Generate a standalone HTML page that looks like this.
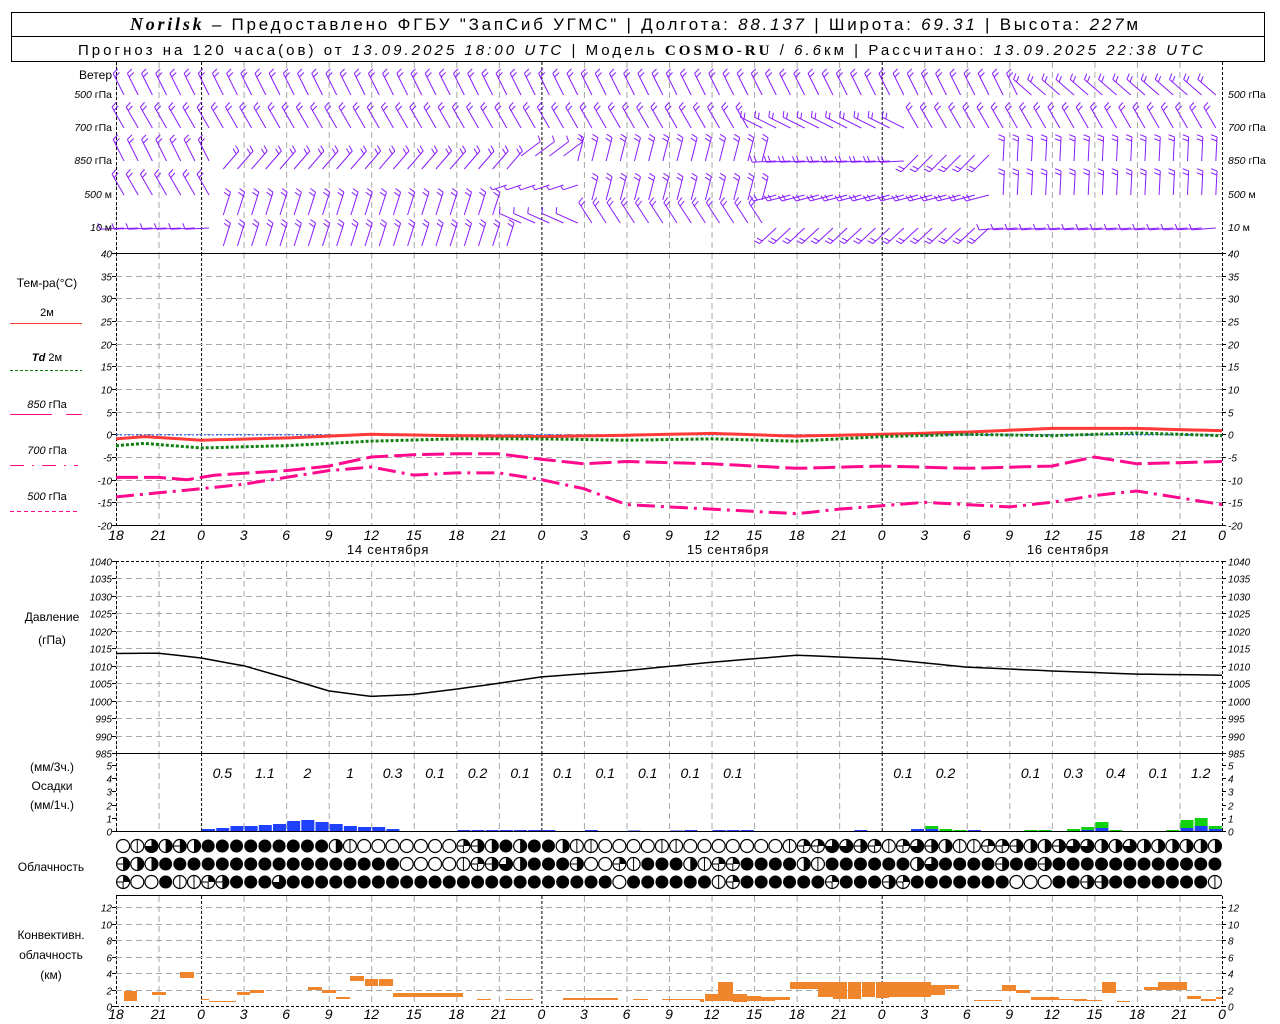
<!DOCTYPE html>
<html><head><meta charset="utf-8">
<style>
html,body{margin:0;padding:0;background:#fff;}
svg{display:block;}
text{font-family:"Liberation Sans","DejaVu Sans",sans-serif;fill:#000;}
.it{font-family:"Liberation Serif",serif;font-style:italic;}
.ax{font-size:10px;font-style:italic;font-family:"Liberation Sans",sans-serif;}
.hx{font-size:14px;font-style:italic;}
</style></head>
<body>
<svg id="s" width="1280" height="1024" viewBox="0 0 1280 1024" xmlns="http://www.w3.org/2000/svg">
<rect x="11.5" y="12.5" width="1253" height="49" fill="none" stroke="#000"/>
<line x1="11" y1="36.5" x2="1265" y2="36.5" stroke="#000"/>
<text x="130" y="30" font-size="17" textLength="1008" lengthAdjust="spacing"><tspan class="it" font-weight="bold" font-size="18">Norilsk</tspan> – Предоставлено ФГБУ "ЗапСиб УГМС" | Долгота: <tspan font-style="italic">88.137</tspan> | Широта: <tspan font-style="italic">69.31</tspan> | Высота: <tspan font-style="italic">227</tspan>м</text>
<text x="78" y="55" font-size="15" textLength="1125" lengthAdjust="spacing">Прогноз на 120 часа(ов) от <tspan font-style="italic">13.09.2025 18:00 UTC</tspan>  | Модель <tspan font-family="Liberation Serif" font-weight="bold">COSMO-RU</tspan> / <tspan font-style="italic">6.6</tspan>км | Рассчитано: <tspan font-style="italic">13.09.2025 22:38 UTC</tspan></text>
<g id="g"></g>
</svg>
<script>
var NS="http://www.w3.org/2000/svg",G=document.getElementById('g');
function el(t,a,txt){var e=document.createElementNS(NS,t);for(var k in a)e.setAttribute(k,a[k]);if(txt!==undefined)e.textContent=txt;G.appendChild(e);return e;}
function X(h){return 116+h*1106/78;}
var L=116,R=1222;
for(var k=0;k<=26;k++){var x=X(k*3);var day=(k%8==2);
 [[62,253],[253,525],[561,753],[753,831],[896,1006]].forEach(function(p){
  el('line',{x1:x+.5,y1:p[0],x2:x+.5,y2:p[1],stroke:day?'#000':'#a8a8a8','stroke-dasharray':day?'3,2':'6,4','stroke-width':1});});}
[[62,253],[253,525],[561,753],[753,831],[896,1006]].forEach(function(p){
 el('line',{x1:L+.5,y1:p[0],x2:L+.5,y2:p[1],stroke:'#000','stroke-dasharray':'3,2'});
 el('line',{x1:R+.5,y1:p[0],x2:R+.5,y2:p[1],stroke:'#000','stroke-dasharray':'3,2'});});
function TY(t){return 253+(40-t)*272/60;}
for(var t=40;t>=-20;t-=5){var y=Math.round(TY(t))+.5;
 if(t<40&&t>-20)el('line',{x1:L,y1:y,x2:R,y2:y,stroke:'#a8a8a8','stroke-dasharray':'6,4'});
 el('line',{x1:L-4,y1:y,x2:L,y2:y,stroke:'#000'});el('line',{x1:R,y1:y,x2:R+4,y2:y,stroke:'#000'});
 el('text',{x:L-4,y:y+4,'text-anchor':'end','class':'ax'},t);el('text',{x:R+6,y:y+4,'class':'ax'},t);}
el('line',{x1:L,y1:253.5,x2:R,y2:253.5,stroke:'#000'});
el('line',{x1:L,y1:525.5,x2:R,y2:525.5,stroke:'#000'});
el('line',{x1:L,y1:TY(0)+.5,x2:R,y2:TY(0)+.5,stroke:'#0040ff','stroke-dasharray':'2,2'});
var hl=['18','21','0','3','6','9','12','15','18','21','0','3','6','9','12','15','18','21','0','3','6','9','12','15','18','21','0'];
function hours(y){for(var k=0;k<=26;k++)el('text',{x:X(k*3),y:y,'text-anchor':'middle','class':'hx'},hl[k]);}
hours(540);hours(1019);
[['14 сентября',371],['15 сентября',711],['16 сентября',1051]].forEach(function(d){el('text',{x:d[1]+17,y:554,'text-anchor':'middle','font-size':13,'letter-spacing':'0.8'},d[0]);});
function series(pts,Y,attrs){var s='';for(var h=0;h<=78;h+=1){var i=0;while(i<pts.length-2&&pts[i+1][0]<h)i++;var a=pts[i],b=pts[i+1];var f=(h-a[0])/(b[0]-a[0]);var v=a[1]+(b[1]-a[1])*Math.max(0,Math.min(1,f));s+=X(h).toFixed(1)+','+Y(v).toFixed(1)+' ';}
 attrs.points=s;attrs.fill='none';el('polyline',attrs);}
series([[0,-1],[2,-0.5],[6,-1.3],[12,-0.8],[18,0],[24,-0.3],[30,-0.5],[36,-0.2],[42,0.2],[48,-0.4],[54,0],[60,0.5],[66,1.3],[72,1.3],[78,0.8]],TY,{stroke:'#ff3838','stroke-width':3});
series([[0,-2.5],[2,-2],[6,-3],[12,-2.5],[18,-1.5],[24,-1],[30,-1],[36,-1.3],[42,-1],[48,-1.5],[54,-0.5],[60,0],[66,-0.3],[72,0.3],[78,-0.3]],TY,{stroke:'#108010','stroke-width':3,'stroke-dasharray':'3,2'});
series([[0,-9.5],[3,-9.5],[5,-10],[7,-9],[12,-8],[15,-7],[18,-5],[21,-4.5],[24,-4.3],[27,-4.3],[30,-5.5],[33,-6.5],[36,-6],[42,-6.5],[48,-7.5],[54,-7],[60,-7.5],[66,-7],[69,-5],[72,-6.5],[78,-6],[84,-6.5]],TY,{stroke:'#ff0a8c','stroke-width':3,'stroke-dasharray':'22,6'});
series([[0,-13.8],[6,-12],[9,-11],[12,-9.5],[15,-8],[18,-7.2],[21,-9],[24,-8.5],[27,-8.5],[30,-10],[33,-12],[36,-15.5],[42,-16.5],[48,-17.5],[51,-16.5],[57,-15],[60,-15.5],[63,-16],[66,-15],[69,-13.5],[72,-12.5],[75,-14],[78,-15.5],[84,-16]],TY,{stroke:'#ff0a8c','stroke-width':3,'stroke-dasharray':'18,6,3,6'});
function PY(p){return 561+(1040-p)*192/55;}
for(var p=1040;p>=985;p-=5){var y=Math.round(PY(p))+.5;
 if(p<1040&&p>985)el('line',{x1:L,y1:y,x2:R,y2:y,stroke:'#a8a8a8','stroke-dasharray':'6,4'});
 el('line',{x1:L-4,y1:y,x2:L,y2:y,stroke:'#000'});el('line',{x1:R,y1:y,x2:R+4,y2:y,stroke:'#000'});
 el('text',{x:L-4,y:y+4,'text-anchor':'end','class':'ax'},p);el('text',{x:R+6,y:y+4,'class':'ax'},p);}
el('line',{x1:L,y1:561.5,x2:R,y2:561.5,stroke:'#000','stroke-dasharray':'3,2'});
el('line',{x1:L,y1:753.5,x2:R,y2:753.5,stroke:'#000'});
series([[0,1013.5],[3,1013.6],[6,1012.2],[9,1010],[12,1006.5],[15,1002.8],[18,1001.2],[21,1001.8],[24,1003.3],[27,1005],[30,1006.8],[36,1008.6],[42,1011],[48,1013],[54,1012],[60,1009.6],[66,1008.5],[72,1007.6],[78,1007.3]],PY,{stroke:'#000','stroke-width':1.5});
function RY(v){return 831-v*13.2;}
for(var v=0;v<=5;v++){var y=Math.round(RY(v))+.5;el('line',{x1:L-4,y1:y,x2:L,y2:y,stroke:'#000'});el('line',{x1:R,y1:y,x2:R+4,y2:y,stroke:'#000'});
 el('text',{x:L-4,y:y+4,'text-anchor':'end','class':'ax'},v);el('text',{x:R+6,y:y+4,'class':'ax'},v);}
el('line',{x1:L,y1:831.5,x2:R,y2:831.5,stroke:'#000'});
var bl=[2,3,5,5,6,7,10,11,9,7,5,4,4,2];
bl.forEach(function(hh,i){el('rect',{x:X(6+i)+1,y:831-hh,width:13,height:hh,fill:'#2040ff'});});
[[24,1],[25,1],[26,1],[27,1],[28,1],[29,1],[30,1],[33,1],[36,0.5],[39,0.5],[40,1],[42,1],[43,1],[44,1],[52,1],[60,1]].forEach(function(a){el('rect',{x:X(a[0])+1,y:831-a[1],width:13,height:a[1],fill:'#2040ff'});});
[[56,0,2],[57,3,2],[58,2,0],[59,1,0],[64,1,0],[65,1,0],[67,2,0],[68,3,1],[69,6,3],[70,1,0],[74,1,0],[75,8,3],[76,8,5],[77,3,2]].forEach(function(a){var g=a[1],b=a[2];
 if(g)el('rect',{x:X(a[0])+1,y:831-g-b,width:13,height:g,fill:'#10d010'});if(b)el('rect',{x:X(a[0])+1,y:831-b,width:13,height:b,fill:'#2040ff'});});
[['0.5',7.5],['1.1',10.5],['2',13.5],['1',16.5],['0.3',19.5],['0.1',22.5],['0.2',25.5],['0.1',28.5],['0.1',31.5],['0.1',34.5],['0.1',37.5],['0.1',40.5],['0.1',43.5],['0.1',55.5],['0.2',58.5],['0.1',64.5],['0.3',67.5],['0.4',70.5],['0.1',73.5],['1.2',76.5]].forEach(function(a){el('text',{x:X(a[1]),y:778,'text-anchor':'middle','class':'hx','font-size':13},a[0]);});
var rows=[
"OIthehFFFFFFFFFhIOOOOOOOqehFhFFhIIOOOOIIOOOOOOOIqqtteqIqtehIIqqehhetthhthhhhhh",
"ehhFFFFFFFFFFFFFFFFFOOOOIqethFFFeOOqIFFFhIqqFFFFhIFFFFFFhtFFFFeFFeFFFFFFFFFFFF",
"qOOFIIqeFFFtFFFFFFFFFFFFFFFFFFFFFFFOFFFFFFIqFFFFFFqFFFeqFFFFFFFOOOFFeeFFFFFFFIFFF"];
var cy=[846,864,882];
function circ(x,y,c){var r=6.5;
 if(c=='F'){el('circle',{cx:x,cy:y,r:r,fill:'#000'});return;}
 el('circle',{cx:x,cy:y,r:r,fill:'#fff',stroke:'#000','stroke-width':1.2});
 if(c=='I'){el('line',{x1:x,y1:y-r,x2:x,y2:y+r,stroke:'#000'});}
 else if(c=='h'){el('path',{d:'M'+x+','+(y-r)+' A'+r+','+r+' 0 0 1 '+x+','+(y+r)+'Z',fill:'#000'});}
 else if(c=='q'){el('path',{d:'M'+x+','+y+' L'+x+','+(y-r)+' A'+r+','+r+' 0 0 1 '+(x+r)+','+y+'Z',fill:'#000'});el('line',{x1:x,y1:y,x2:x,y2:y+r,stroke:'#000'});el('line',{x1:x-r,y1:y,x2:x,y2:y,stroke:'#000'});}
 else if(c=='t'){el('path',{d:'M'+x+','+y+' L'+x+','+(y-r)+' A'+r+','+r+' 0 1 1 '+(x-r)+','+y+'Z',fill:'#000'});}
 else if(c=='e'){el('path',{d:'M'+x+','+(y-r)+' A'+r+','+r+' 0 0 1 '+x+','+(y+r)+'Z',fill:'#000'});el('line',{x1:x-r,y1:y,x2:x,y2:y,stroke:'#000'});}
}
rows.forEach(function(s,ri){for(var i=0;i<78;i++){circ(X(i)+7.1,cy[ri],s[i]||'F');}});
function CY(v){return 1006-v*8.25;}
for(var v=0;v<=12;v+=2){var y=Math.round(CY(v))+.5;
 if(v>0)el('line',{x1:L,y1:y,x2:R,y2:y,stroke:'#a8a8a8','stroke-dasharray':'6,4'});
 el('line',{x1:L-4,y1:y,x2:L,y2:y,stroke:'#000'});el('line',{x1:R,y1:y,x2:R+4,y2:y,stroke:'#000'});
 el('text',{x:L-4,y:y+4,'text-anchor':'end','class':'ax'},v);el('text',{x:R+6,y:y+4,'class':'ax'},v);}
el('line',{x1:L,y1:895.5,x2:R,y2:895.5,stroke:'#000'});
el('line',{x1:L,y1:1006.5,x2:R,y2:1006.5,stroke:'#000','stroke-dasharray':'3,2'});
var cb=[[124,137,991,1001],[152,166,992,995],[180,194,972,978],[201,209,999,1000],[209,236,1001,1002],[237,250,992,995],[250,264,990,993],[308,322,987,990],[322,336,990,993],[336,350,997,999],[350,364,976,981],[365,378,979,986],[379,393,979,986],[393,463,993,997],[477,491,999,1000],[505,533,999,1000],[563,618,998,1000],[633,648,999,1000],[662,704,999,1000],
[700,704,999,1002],[705,718,994,1001],[718,733,982,1001],[733,747,994,1002],[747,761,996,1001],[761,775,997,1001],[775,790,997,1000],[790,818,982,989],[818,833,982,997],[833,847,982,999],[848,861,982,999],[862,875,982,997],[876,889,982,998],[889,931,982,997],[931,945,985,995],[945,959,985,989],[974,1002,1000,1001],[1002,1016,985,991],[1016,1030,990,993],[1031,1044,997,1000],[1044,1059,997,1000],[1059,1074,999,1000],[1074,1087,999,1001],[1087,1102,1000,1001],[1102,1116,982,993],[1117,1130,1001,1002],[1144,1158,987,990],[1158,1187,982,990],[1187,1201,996,999],[1201,1216,999,1001],[1216,1222,997,999]];
cb.forEach(function(b){el('rect',{x:b[0],y:b[2],width:b[1]-b[0],height:b[3]-b[2],fill:'#f0862c'});});
var rowsW=[95,128,161,195,228];
function seg(ri,h){
 if(ri==0){return h<64?[-0.45,-0.9,0,3]:[-0.75,-0.65,0,3];}
 if(ri==1){return (h>44&&h<56)?[-0.9,-0.45,0,3]:[-0.5,-0.87,0,3];}
 if(ri==2){if(h<7)return[-0.45,-0.9,0,2];if(h<28)return[0.65,-0.75,8,2];if(h<32)return[0.8,-0.6,-5,1];if(h<46)return[0.25,-0.97,0,2];if(h<56)return[-1,0.05,0,2];if(h<62)return[-0.7,0.7,-6,2];return[0.05,-1,0,2];}
 if(ri==3){if(h<7)return[-0.5,-0.87,0,2];if(h<27)return[0.3,-0.95,20,2];if(h<33)return[-0.6,0.2,-10,1];if(h<46)return[0.25,-0.97,5,2];if(h<62)return[-0.95,0.25,0,2];return[0.05,-1,0,2];}
 if(h<7)return[-1,0.05,0,1];if(h<28)return[0.3,-0.95,18,2];if(h<33)return[-0.9,-0.4,-5,1];if(h<46)return[-0.55,-0.85,-5,2];if(h<62)return[-0.7,0.65,0,2];return[-1,0.08,0,1];}
for(var ri=0;ri<5;ri++){for(var h=0;h<78;h++){var sg=seg(ri,h);var x=X(h)+8,y=rowsW[ri]+sg[2];var len=24;
 var tx=x+sg[0]*len,ty=y+sg[1]*len;
 el('line',{x1:x,y1:y,x2:tx,y2:ty,stroke:'#8a1cff','stroke-width':1});
 var px=sg[1],py=-sg[0];if(py>0){px=-px;py=-py;}
 var nb=Math.min(sg[3],2);
 for(var b=0;b<nb;b++){var bx=tx-sg[0]*b*4,by=ty-sg[1]*b*4;
  el('line',{x1:bx,y1:by,x2:bx+px*6+sg[0]*2,y2:by+py*6+sg[1]*2,stroke:'#8a1cff','stroke-width':1});}}}
el('text',{x:112,y:79,'text-anchor':'end','font-size':12},'Ветер');
[['500',' гПа',98],['700',' гПа',131],['850',' гПа',164],['500',' м',198],['10',' м',231]].forEach(function(a,i){
 var t=el('text',{x:112,y:a[2],'text-anchor':'end','font-size':10.5});t.innerHTML='<tspan font-style="italic">'+a[0]+'</tspan>'+a[1];
 var t2=el('text',{x:1228,y:a[2],'font-size':10.5});t2.innerHTML='<tspan font-style="italic">'+a[0]+'</tspan>'+a[1];});
el('text',{x:47,y:287,'text-anchor':'middle','font-size':12},'Тем-ра(°C)');
el('text',{x:47,y:316,'text-anchor':'middle','font-size':11},'2м');
el('line',{x1:10,y1:323.5,x2:82,y2:323.5,stroke:'#ff3838','stroke-width':1});
var td=el('text',{x:47,y:361,'text-anchor':'middle','font-size':11});td.innerHTML='<tspan font-style="italic" font-weight="bold">Td</tspan>  2м';
el('line',{x1:10,y1:370.5,x2:82,y2:370.5,stroke:'#108010','stroke-dasharray':'3,2'});
[['850',408,'none'],['700',454,'14,8,2,8'],['500',500,'4,3']].forEach(function(a,i){var t=el('text',{x:47,y:a[1],'text-anchor':'middle','font-size':11});t.innerHTML='<tspan font-style="italic">'+a[0]+'</tspan>  гПа';
 if(i==0){el('line',{x1:10,y1:414.5,x2:52,y2:414.5,stroke:'#ff0a8c'});el('line',{x1:66,y1:414.5,x2:82,y2:414.5,stroke:'#ff0a8c'});}
 else el('line',{x1:10,y1:a[1]+11.5,x2:78,y2:a[1]+11.5,stroke:'#ff0a8c','stroke-dasharray':a[2]});});
el('text',{x:52,y:621,'text-anchor':'middle','font-size':12},'Давление');
el('text',{x:52,y:644,'text-anchor':'middle','font-size':12},'(гПа)');
el('text',{x:52,y:771,'text-anchor':'middle','font-size':12},'(мм/3ч.)');
el('text',{x:52,y:790,'text-anchor':'middle','font-size':12},'Осадки');
el('text',{x:52,y:809,'text-anchor':'middle','font-size':12},'(мм/1ч.)');
el('text',{x:51,y:871,'text-anchor':'middle','font-size':12},'Облачность');
el('text',{x:51,y:939,'text-anchor':'middle','font-size':12},'Конвективн.');
el('text',{x:51,y:959,'text-anchor':'middle','font-size':12},'облачность');
el('text',{x:51,y:979,'text-anchor':'middle','font-size':12},'(км)');
</script>
</body></html>
